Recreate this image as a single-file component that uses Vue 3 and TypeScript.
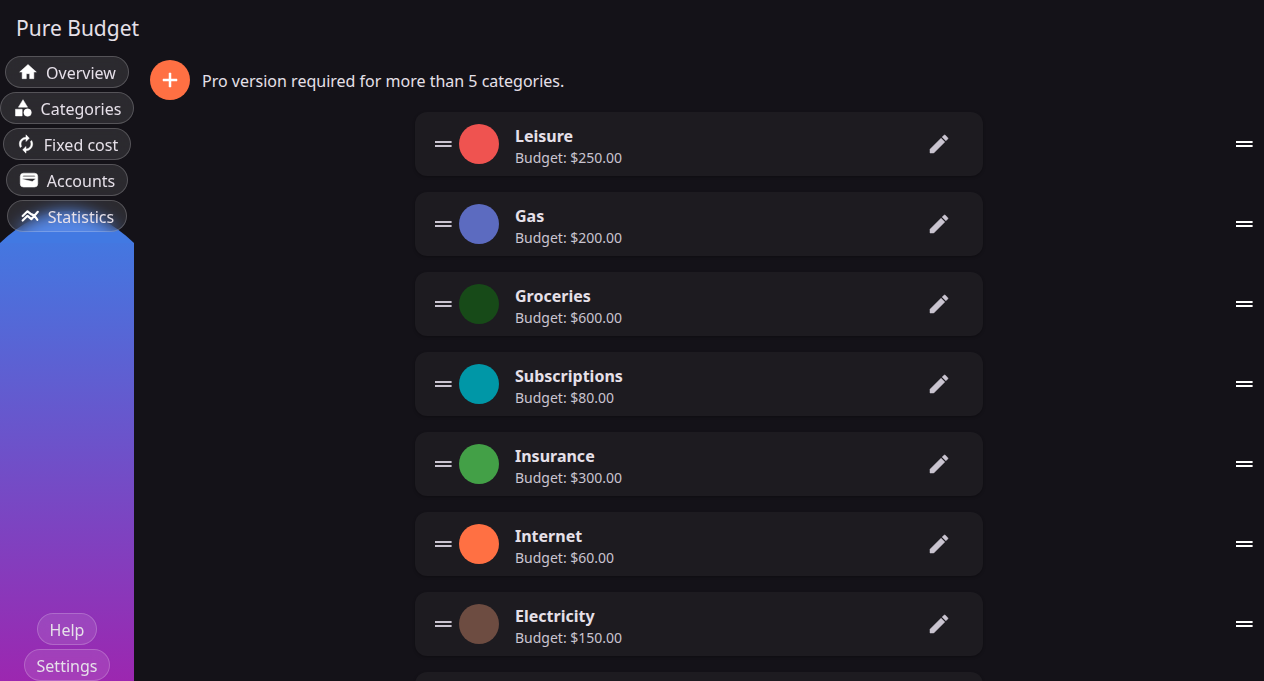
<script setup lang="ts">
interface NavItem {
  label: string
  icon: string
  line?: boolean
}

interface Category {
  name: string
  budget: number
  color: string
}

const navItems: NavItem[] = [
  { label: 'Overview', icon: 'M10 20v-6h4v6h5v-8h3L12 3 2 12h3v8z' },
  {
    label: 'Categories',
    icon: 'M12 2l-5.500 9h11zM17.500 13a4.500 4.500 0 1 0 0 9a4.500 4.500 0 1 0 0-9zM3 13.500h8v8H3z',
  },
  {
    label: 'Fixed cost',
    icon: 'M12 6v3l4-4-4-4v3c-4.420 0-8 3.580-8 8 0 1.570.460 3.030 1.240 4.260L6.700 14.800c-.450-.830-.700-1.790-.700-2.800 0-3.310 2.690-6 6-6zm6.760 1.740L17.300 9.200c.440.840.700 1.790.700 2.800 0 3.310-2.690 6-6 6v-3l-4 4 4 4v-3c4.420 0 8-3.580 8-8 0-1.570-.460-3.030-1.240-4.260z',
  },
  {
    label: 'Accounts',
    icon: 'M5.500 3.800h13a4 4 0 0 1 4 4v8.700a4 4 0 0 1-4 4h-13a4 4 0 0 1-4-4V7.800a4 4 0 0 1 4-4zM6 6.500q-1.500 0-1.500 1.500h15q0-1.500-1.500-1.500zM4.500 10.200v1l11.500 2.600 3.500-2.600v-1z',
  },
  {
    label: 'Statistics',
    icon: 'M3.200 12L9 6.400l4.200 3.400q4.400 1.200 7.600 6.800M3.200 17.400L9 11.800l4.600 4L21.400 7',
    line: true,
  },
]

const categories: Category[] = [
  { name: 'Leisure', budget: 250, color: '#ef5350' },
  { name: 'Gas', budget: 200, color: '#5c6bc0' },
  { name: 'Groceries', budget: 600, color: '#174a18' },
  { name: 'Subscriptions', budget: 80, color: '#0097a7' },
  { name: 'Insurance', budget: 300, color: '#43a047' },
  { name: 'Internet', budget: 60, color: '#ff7043' },
  { name: 'Electricity', budget: 150, color: '#6d4c41' },
  { name: 'Water', budget: 40, color: '#29b6f6' },
]

const money = (n: number): string => `$${n.toFixed(2)}`
</script>

<template>
  <div class="app">
    <header class="bar"><h1>Pure Budget</h1></header>
    <div class="body">
      <nav class="side">
        <svg class="wave" viewBox="0 0 134 32" preserveAspectRatio="none" aria-hidden="true">
          <path d="M0 32Q67 -32 134 32z" />
        </svg>
        <div class="fill"></div>
        <div class="group">
          <button v-for="item in navItems" :key="item.label" class="chip" type="button">
            <svg viewBox="0 0 24 24" aria-hidden="true" :class="{ line: item.line }">
              <path :d="item.icon" fill-rule="evenodd" />
            </svg>
            <span>{{ item.label }}</span>
          </button>
        </div>
        <div class="group">
          <button class="chip" type="button">Help</button>
          <button class="chip" type="button">Settings</button>
        </div>
      </nav>
      <main class="main">
        <div class="notice">
          <button class="add" type="button" aria-label="Add category">
            <svg viewBox="0 0 24 24" aria-hidden="true"><path d="M19 13h-6v6h-2v-6H5v-2h6V5h2v6h6z" /></svg>
          </button>
          <p>Pro version required for more than 5 categories.</p>
        </div>
        <ul class="list">
          <li v-for="c in categories" :key="c.name" class="row">
            <article class="card">
              <svg class="grip" viewBox="0 0 24 24" aria-hidden="true"><path d="M4 9h16.600v2H4zM4 13h16.600v2H4z" /></svg>
              <span class="dot" :style="{ background: c.color }"></span>
              <div class="text">
                <h2>{{ c.name }}</h2>
                <p>Budget: {{ money(c.budget) }}</p>
              </div>
              <button class="edit" type="button" :aria-label="`Edit ${c.name}`">
                <svg viewBox="0 0 24 24" aria-hidden="true">
                  <path d="M3 17.250V21h3.750L17.810 9.940l-3.750-3.750zM20.710 7.040a1 1 0 0 0 0-1.410l-2.340-2.340a1 1 0 0 0-1.410 0l-1.830 1.830 3.750 3.750z" />
                </svg>
              </button>
            </article>
            <button class="drag" type="button" :aria-label="`Reorder ${c.name}`">
              <svg viewBox="0 0 24 24" aria-hidden="true"><path d="M4 9h16.600v2H4zM4 13h16.600v2H4z" /></svg>
            </button>
          </li>
        </ul>
      </main>
    </div>
  </div>
</template>

<style>
body {
  margin: 0;
  background: #141218;
}
</style>

<style scoped>
.app {
  display: flex;
  flex-direction: column;
  height: 100vh;
  overflow: hidden;
  background: #141218;
  color: #e6e0e9;
  font-family: "Noto Sans", "Open Sans", sans-serif;
  font-size: 16px;
  line-height: 24px;
}
h1,
h2,
p,
ul {
  margin: 0;
  padding: 0;
}
button {
  border: 0;
  padding: 0;
  background: none;
  color: inherit;
  font: inherit;
  cursor: pointer;
}
svg {
  display: block;
  width: 24px;
  height: 24px;
  fill: currentColor;
}
.bar {
  display: flex;
  align-items: center;
  height: 56px;
  padding: 0 16px;
  box-sizing: border-box;
}
h1 {
  font-size: 21px;
  font-weight: 400;
  line-height: 28px;
}
.body {
  display: flex;
  flex: 1;
  min-height: 0;
}
.side {
  position: relative;
  display: flex;
  flex-direction: column;
  justify-content: space-between;
  flex: none;
  width: 134px;
}
.wave {
  position: absolute;
  top: 155px;
  left: 0;
  width: 100%;
  height: 32px;
  fill: #4279e2;
}
.fill {
  position: absolute;
  inset: 187px 0 0;
  background: linear-gradient(#4477e0, #9c27b0);
}
.group {
  display: flex;
  flex-direction: column;
  align-items: center;
  gap: 4px;
}
.chip {
  position: relative;
  display: flex;
  align-items: center;
  gap: 8px;
  height: 32px;
  padding: 2px 12px 0;
  box-sizing: border-box;
  border: 1px solid rgba(255, 255, 255, 0.2);
  border-radius: 16px;
  background: rgba(255, 255, 255, 0.1);
  backdrop-filter: blur(8px);
  white-space: nowrap;
}
.chip svg {
  width: 20px;
  height: 20px;
  margin-bottom: 2px;
  color: #fff;
  stroke: currentColor;
  stroke-width: 0.6;
  stroke-linejoin: round;
}
.chip svg.line {
  fill: none;
  stroke-width: 2.6;
  stroke-linecap: round;
}
.main {
  flex: 1;
  min-width: 0;
}
.notice {
  display: flex;
  align-items: center;
  gap: 12px;
  padding: 4px 16px;
}
.notice p {
  padding-top: 2px;
}
.add {
  display: grid;
  place-items: center;
  width: 40px;
  height: 40px;
  border-radius: 50%;
  background: #ff7043;
  color: #fff;
}
.add svg,
.edit svg {
  stroke: currentColor;
  stroke-width: 0.5;
  stroke-linejoin: round;
}
.list {
  list-style: none;
}
.row {
  display: grid;
  grid-template-columns: 1fr minmax(0, 568px) 1fr;
  align-items: center;
  padding: 8px;
}
.card {
  grid-column: 2;
  display: flex;
  align-items: center;
  height: 64px;
  padding: 0 24px 0 16px;
  box-sizing: border-box;
  border-radius: 12px;
  background: #1d1b20;
  box-shadow: 0 1px 3px rgba(0, 0, 0, 0.3);
}
.grip {
  color: #cac4d0;
}
.dot {
  width: 40px;
  height: 40px;
  margin: 0 16px 0 4px;
  border-radius: 50%;
}
.text {
  flex: 1;
  padding-top: 4px;
}
h2 {
  font-size: 16px;
  font-weight: 700;
  line-height: 24px;
}
.text p {
  font-size: 14px;
  line-height: 20px;
  color: #cac4d0;
}
.edit {
  display: grid;
  place-items: center;
  width: 40px;
  height: 40px;
  color: #cac4d0;
}
.drag {
  justify-self: end;
  color: #fff;
}
</style>
